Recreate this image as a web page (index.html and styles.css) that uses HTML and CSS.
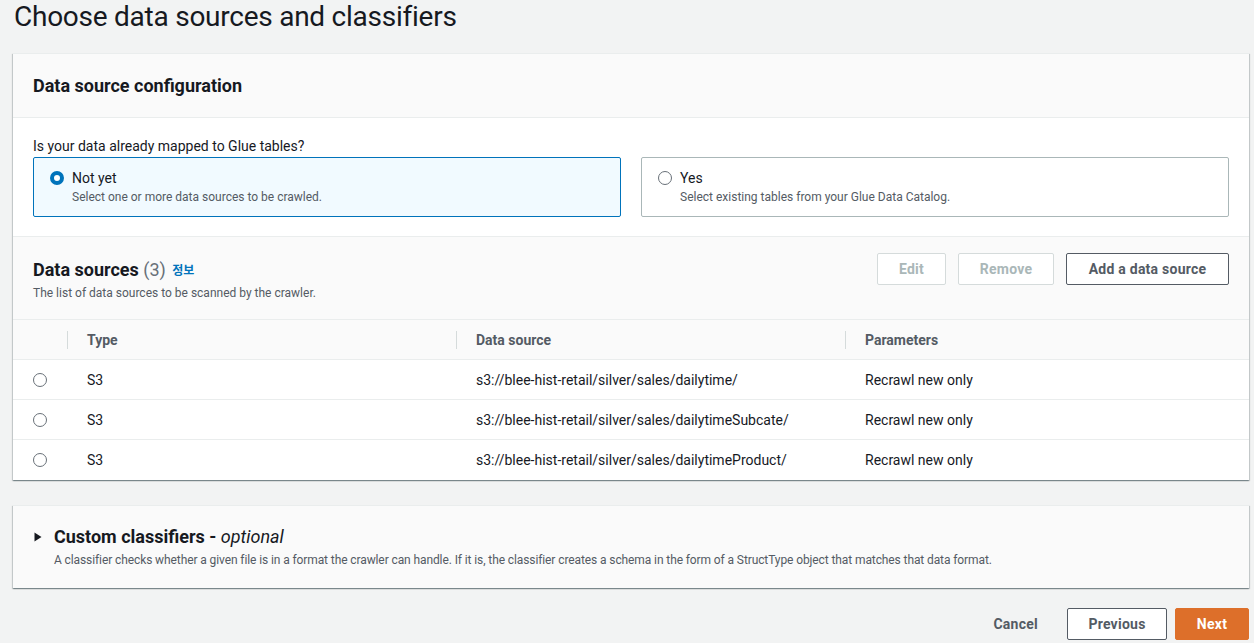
FILE: index.html
```html
<!DOCTYPE html>
<html lang="en">
<head>
<meta charset="utf-8">
<title>Choose data sources and classifiers</title>
<link rel="stylesheet" href="styles.css">
</head>
<body>
<div class="page">
  <h1 class="page-title">Choose data sources and classifiers</h1>

  <section class="container">
    <div class="container-header">
      <h2 class="h2">Data source configuration</h2>
    </div>
    <div class="config-body">
      <div class="field-label">Is your data already mapped to Glue tables?</div>
      <div class="tiles">
        <div class="tile tile-selected">
          <span class="radio radio-checked"></span>
          <div class="tile-text">
            <div class="tile-label">Not yet</div>
            <div class="tile-desc">Select one or more data sources to be crawled.</div>
          </div>
        </div>
        <div class="tile">
          <span class="radio"></span>
          <div class="tile-text">
            <div class="tile-label">Yes</div>
            <div class="tile-desc">Select existing tables from your Glue Data Catalog.</div>
          </div>
        </div>
      </div>
    </div>

    <div class="table-header">
      <div class="table-title">
        <h2 class="h2">Data sources <span class="count">(3)</span> <a class="info">정보</a></h2>
        <div class="table-desc">The list of data sources to be scanned by the crawler.</div>
      </div>
      <div class="actions">
        <button class="btn btn-disabled btn-edit">Edit</button>
        <button class="btn btn-disabled btn-remove">Remove</button>
        <button class="btn btn-normal btn-add">Add a data source</button>
      </div>
    </div>

    <div class="table">
      <div class="row head">
        <div class="cell c-sel"></div>
        <div class="cell c-col"><span class="sep"></span>Type</div>
        <div class="cell c-col"><span class="sep"></span>Data source</div>
        <div class="cell c-last"><span class="sep"></span>Parameters</div>
      </div>
      <div class="row">
        <div class="cell c-sel"><span class="radio small"></span></div>
        <div class="cell c-col">S3</div>
        <div class="cell c-col">s3://blee-hist-retail/silver/sales/dailytime/</div>
        <div class="cell c-last">Recrawl new only</div>
      </div>
      <div class="row">
        <div class="cell c-sel"><span class="radio small"></span></div>
        <div class="cell c-col">S3</div>
        <div class="cell c-col">s3://blee-hist-retail/silver/sales/dailytimeSubcate/</div>
        <div class="cell c-last">Recrawl new only</div>
      </div>
      <div class="row">
        <div class="cell c-sel"><span class="radio small"></span></div>
        <div class="cell c-col">S3</div>
        <div class="cell c-col">s3://blee-hist-retail/silver/sales/dailytimeProduct/</div>
        <div class="cell c-last">Recrawl new only</div>
      </div>
    </div>
  </section>

  <section class="container expandable">
    <div class="exp-header">
      <svg class="caret" width="8" height="10" viewBox="0 0 8 10"><path d="M0.5 0.5 L7.5 5 L0.5 9.5 Z" fill="#16191f"/></svg>
      <div>
        <h2 class="h2">Custom classifiers - <i class="opt">optional</i></h2>
        <div class="exp-desc">A classifier checks whether a given file is in a format the crawler can handle. If it is, the classifier creates a schema in the form of a StructType object that matches that data format.</div>
      </div>
    </div>
  </section>

  <div class="footer">
    <button class="btn btn-link">Cancel</button>
    <button class="btn btn-normal btn-prev">Previous</button>
    <button class="btn btn-primary">Next</button>
  </div>
</div>
</body>
</html>
```

FILE: styles.css
```css
* { box-sizing: border-box; }
html, body { margin: 0; padding: 0; }
body {
  background: #f2f3f3;
  font-family: Roboto, "Noto Sans CJK KR", sans-serif;
  color: #16191f;
  width: 1254px;
  height: 643px;
  overflow: hidden;
}
.page {
  padding: 0 5px 0 13px;
}
.page-title {
  margin: 0 0 19px 1px;
  font-size: 28px;
  font-weight: 400;
  line-height: 34px;
  color: #16191f;
  letter-spacing: -0.25px;
}
.container {
  background: #fff;
  border-top: 1px solid #eaeded;
  box-shadow: 0 1px 1px 0 rgba(0,28,36,.3), 1px 1px 1px 0 rgba(0,28,36,.15), -1px 1px 1px 0 rgba(0,28,36,.15);
}
.container-header {
  background: #fafafa;
  height: 64px;
  padding: 0 20px;
  display: flex;
  align-items: center;
  border-bottom: 1px solid #eaeded;
}
.h2 {
  margin: 0;
  font-size: 18px;
  font-weight: 700;
  line-height: 32px;
  color: #16191f;
}
.config-body {
  padding: 17px 20px 19px;
}
.field-label {
  font-size: 14px;
  line-height: 22px;
  color: #16191f;
}
.tiles {
  display: flex;
  gap: 20px;
}
.tile {
  flex: 1;
  height: 60px;
  border: 1px solid #aab7b8;
  border-radius: 2px;
  padding: 9px 16px 0;
  display: flex;
  align-items: flex-start;
  gap: 8px;
  background: #fff;
}
.tile-selected {
  border-color: #0073bb;
  background: #f1faff;
}
.radio {
  display: inline-block;
  width: 14px;
  height: 14px;
  border-radius: 50%;
  border: 1px solid #687078;
  background: #fff;
  flex: none;
  margin-top: 4px;
}
.radio-checked {
  border: 4px solid #0073bb;
  background: #fff;
}
.radio.small {
  width: 14px;
  height: 14px;
  margin: 0;
}
.tile-label {
  font-size: 14px;
  line-height: 22px;
}
.tile-desc {
  font-size: 12px;
  line-height: 16px;
  color: #545b64;
}
.table-header {
  background: #fafafa;
  border-top: 1px solid #eaeded;
  padding: 16px 20px 18px;
  display: flex;
  justify-content: space-between;
  align-items: flex-start;
}
.table-title .h2 {
  position: relative;
  top: 1px;
}
.count {
  font-weight: 400;
  color: #687078;
}
.info {
  font-size: 12px;
  font-weight: 700;
  color: #0073bb;
  margin-left: 2px;
  vertical-align: 1px;
}
.table-desc {
  font-size: 12px;
  line-height: 16px;
  color: #545b64;
  margin-top: -1px;
}
.actions {
  display: flex;
  gap: 12px;
}
.btn {
  font-family: Roboto, "Noto Sans CJK KR", sans-serif;
  font-size: 14px;
  font-weight: 700;
  height: 32px;
  line-height: 20px;
  padding: 4px 20px;
  border-radius: 2px;
  border: 1px solid #545b64;
  background: #fff;
  color: #545b64;
  letter-spacing: 0.25px;
}
.btn-disabled {
  border-color: #d5dbdb;
  color: #aab7b8;
}
.btn-edit { width: 69px; padding: 4px 0; }
.btn-remove { width: 96px; padding: 4px 0; }
.btn-add { width: 163px; padding: 4px 0; }
.table {
  border-top: 1px solid #eaeded;
}
.row {
  display: flex;
  height: 40px;
  border-bottom: 1px solid #eaeded;
  font-size: 14px;
  align-items: center;
}
.row:last-child { border-bottom: none; }
.row.head {
  background: #fafafa;
  font-weight: 700;
  color: #545b64;
  height: 40px;
}
.cell {
  position: relative;
  display: flex;
  align-items: center;
  height: 100%;
  padding-left: 20px;
}
.c-sel {
  width: 54px;
  padding-left: 20px;
}
.c-col { width: 389px; }
.c-last { flex: 1; }
.sep {
  position: absolute;
  left: 0;
  top: 11px;
  height: 18px;
  width: 1px;
  background: #d5dbdb;
}
.expandable {
  margin-top: 25px;
  background: #fafafa;
}
.exp-header {
  height: 82px;
  padding: 15px 20px 0 21px;
  display: flex;
  align-items: flex-start;
  gap: 12px;
}
.caret {
  margin-top: 11px;
  flex: none;
}
.opt {
  font-weight: 400;
}
.exp-desc {
  font-size: 12px;
  line-height: 16px;
  color: #545b64;
  margin-top: -1px;
  letter-spacing: -0.1px;
}
.footer {
  display: flex;
  justify-content: flex-end;
  align-items: center;
  gap: 8px;
  margin-top: 20px;
}
.btn-link {
  border-color: transparent;
  background: transparent;
  padding: 4px 20px;
  margin-right: 0;
}
.btn-prev { width: 100px; padding: 4px 0; color: #545b64; }
.btn-primary {
  background: #dd6f2a;
  border-color: #dd6f2a;
  color: #fff;
  width: 74px;
  padding: 4px 0;
}
```
